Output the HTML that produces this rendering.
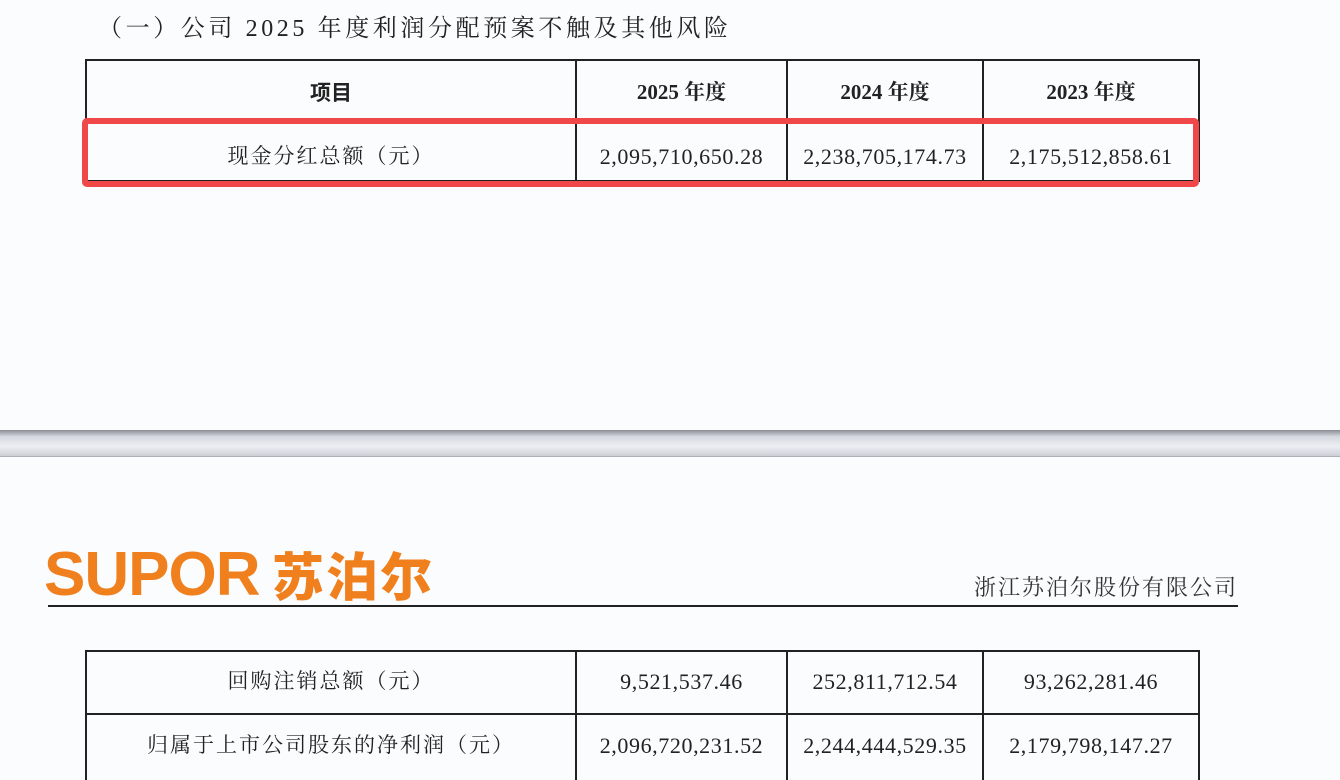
<!DOCTYPE html>
<html><head><meta charset="utf-8"><style>
body{margin:0;width:1340px;height:774px;overflow:hidden;background:#fbfcfe;position:relative;font-family:"Liberation Serif","Noto Serif CJK SC",serif;color:#222}
.a{position:absolute}
.h{position:absolute;background:#222;height:2px}
.v{position:absolute;background:#222;width:2px}
.c{position:absolute;text-align:center;font-size:21px;line-height:24px}
.n{font-size:22px;letter-spacing:0.6px}
</style></head><body>
<div class="a" style="left:98px;top:14px;font-size:24px;line-height:30px;letter-spacing:3.6px">（一）公司 2025 年度利润分配预案不触及其他风险</div>
<!-- top table -->
<div class="h" style="left:86px;top:59px;width:1114px"></div>
<div class="h" style="left:86px;top:120px;width:1114px"></div>
<div class="h" style="left:86px;top:180px;width:1114px"></div>
<div class="v" style="left:85px;top:59px;height:122px"></div>
<div class="v" style="left:575px;top:59px;height:122px"></div>
<div class="v" style="left:786px;top:59px;height:122px"></div>
<div class="v" style="left:982px;top:59px;height:122px"></div>
<div class="v" style="left:1198px;top:59px;height:122px"></div>
<div class="c" style="left:86px;width:490px;top:80px;font-weight:bold;font-family:'Noto Sans CJK SC',sans-serif">项目</div>
<div class="c" style="left:576px;width:211px;top:80px;font-weight:bold">2025 年度</div>
<div class="c" style="left:787px;width:196px;top:80px;font-weight:bold">2024 年度</div>
<div class="c" style="left:983px;width:216px;top:80px;font-weight:bold">2023 年度</div>
<div class="c" style="left:86px;width:490px;top:144px;letter-spacing:2px">现金分红总额（元）</div>
<div class="c n" style="left:576px;width:211px;top:145px">2,095,710,650.28</div>
<div class="c n" style="left:787px;width:196px;top:145px">2,238,705,174.73</div>
<div class="c n" style="left:983px;width:216px;top:145px">2,175,512,858.61</div>
<div class="a" style="left:82px;top:118px;width:1105px;height:57px;border:6px solid #f04848;border-radius:5px"></div>
<!-- separator -->
<div class="a" style="left:0;top:430px;width:1340px;height:27px;background:linear-gradient(#8a8d95,#d7d9e0 25%,#eceef4 60%,#cfd1d8 95%,#9a9ca4)"></div>
<!-- logo -->
<div class="a" style="left:44px;top:540px;font-family:'Liberation Sans',sans-serif;font-weight:bold;font-size:62px;line-height:70px;color:#f0801e;letter-spacing:-1px">SUPOR</div>
<div class="a" style="left:272px;top:543px;font-family:'Noto Sans CJK SC',sans-serif;font-weight:900;font-size:52px;line-height:62px;color:#f0801e;letter-spacing:2px">苏泊尔</div>
<div class="a" style="left:974px;top:572px;font-size:22px;line-height:30px;letter-spacing:2px;font-family:'Noto Serif CJK SC',serif;color:#333">浙江苏泊尔股份有限公司</div>
<div class="h" style="left:48px;top:605px;width:1190px"></div>
<!-- bottom table -->
<div class="h" style="left:86px;top:650px;width:1114px"></div>
<div class="h" style="left:86px;top:713px;width:1114px"></div>
<div class="v" style="left:85px;top:650px;height:130px"></div>
<div class="v" style="left:575px;top:650px;height:130px"></div>
<div class="v" style="left:786px;top:650px;height:130px"></div>
<div class="v" style="left:982px;top:650px;height:130px"></div>
<div class="v" style="left:1198px;top:650px;height:130px"></div>
<div class="c" style="left:86px;width:490px;top:669px;letter-spacing:2px">回购注销总额（元）</div>
<div class="c n" style="left:576px;width:211px;top:670px">9,521,537.46</div>
<div class="c n" style="left:787px;width:196px;top:670px">252,811,712.54</div>
<div class="c n" style="left:983px;width:216px;top:670px">93,262,281.46</div>
<div class="c" style="left:86px;width:490px;top:733px;letter-spacing:2px">归属于上市公司股东的净利润（元）</div>
<div class="c n" style="left:576px;width:211px;top:734px">2,096,720,231.52</div>
<div class="c n" style="left:787px;width:196px;top:734px">2,244,444,529.35</div>
<div class="c n" style="left:983px;width:216px;top:734px">2,179,798,147.27</div>
</body></html>
